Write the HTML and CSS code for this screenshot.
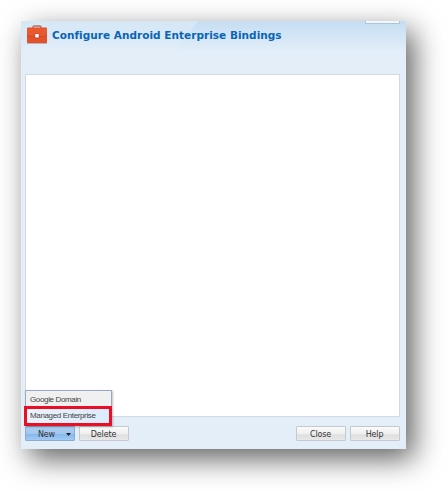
FILE: index.html
```html
<!DOCTYPE html>
<html lang="en">
<head>
<meta charset="utf-8">
<title>Configure Android Enterprise Bindings</title>
<link rel="stylesheet" href="styles.css">
</head>
<body>
<main class="window">
  <header class="header">
    <svg class="briefcase" width="22" height="20" viewBox="0 0 22 20">
      <path d="M7 3.500V2Q7 1 8.500 1H13.500Q15 1 15 2V3.500" fill="none" stroke="#b96d5c" stroke-width="1.500"/>
      <rect x="1" y="2.500" width="20" height="15.500" rx="1" fill="#e4512b"/>
      <path d="M1 3.500h20v6.500L18.500 11.500h-15L1 10z" fill="#ea582f"/>
      <path d="M1 10L3.500 11.500h15L21 10" fill="none" stroke="#bd492d" stroke-width=".8"/>
      <path d="M1 18h20" stroke="#b2573f" stroke-width=".8"/>
      <rect x="8.500" y="8.500" width="5" height="5" rx="1" fill="#d4442a"/>
      <rect x="9.200" y="9" width="3.600" height="3.600" rx=".8" fill="#fff"/>
    </svg>
    <h1 class="title">Configure Android Enterprise Bindings</h1>
    <span class="tab-edge"></span>
  </header>
  <section class="panel"></section>
  <footer class="footer">
    <div class="new-wrap">
      <button class="btn btn-new">New<svg class="caret" width="5" height="3" viewBox="0 0 5 3"><path d="M0 0h5L2.500 3z" fill="#222"/></svg></button>
      <div class="menu">
        <div class="item">Google Domain</div>
        <div class="item selected">Managed Enterprise</div>
      </div>
    </div>
    <button class="btn">Delete</button>
    <button class="btn btn-close">Close</button>
    <button class="btn">Help</button>
  </footer>
</main>
</body>
</html>
```
FILE: styles.css
```css
* { box-sizing: border-box; }
body {
  margin: 0;
  height: 491px;
  padding: 21px 0 0 21px;
  background: #fff;
  overflow: hidden;
}
.window {
  display: flex;
  flex-direction: column;
  width: 385px;
  height: 428px;
  padding: 0 6px 0 4px;
  background: #e3eef9;
  box-shadow: 8px 10px 27px rgba(0, 0, 0, .62);
}
.header {
  position: relative;
  display: flex;
  flex: none;
  height: 53px;
  margin: 0 -6px 0 -4px;
  padding: 4px 0 0 5px;
  background: linear-gradient(#c5ddf2, #e3eef9 31px);
}
.header::before {
  content: "";
  position: absolute;
  left: 0;
  top: 0;
  width: 177px;
  height: 30px;
  background: linear-gradient(#d5e7f6, #dbe9f7 18px, #e3eef9);
  clip-path: polygon(0 0, 100% 0, 155px 100%, 0 100%);
}
.briefcase { position: relative; flex: none; }
.title {
  position: relative;
  margin: 3px 0 0 4px;
  font: bold 10.500px/14px "DejaVu Sans", sans-serif;
  letter-spacing: .03px;
  color: #0865b5;
  white-space: nowrap;
}
.tab-edge {
  position: absolute;
  right: 6px;
  top: 0;
  width: 35px;
  height: 3px;
  background: #f3f7fb;
  border: 1px solid #aac7e0;
  border-top: 0;
}
.panel {
  flex: none;
  height: 343px;
  background: #fff;
  border: 1px solid #d2d9e4;
  width: 375px;
}
.footer {
  display: flex;
  gap: 4px;
  padding-top: 9px;
}
.new-wrap { position: relative; }
.btn {
  display: flex;
  align-items: center;
  justify-content: center;
  width: 50px;
  height: 15px;
  padding: 2px 1px 0 0;
  border: 1px solid #c5c8cd;
  border-radius: 1px;
  background: linear-gradient(#fbfbfb, #eee 55%, #dedede 60%, #e8e8e8);
  font: 8px/10px "DejaVu Sans", sans-serif;
  letter-spacing: -.15px;
  color: #333;
}
.btn-new {
  position: relative;
  padding-right: 7px;
  border-color: #8dabd0;
  background: linear-gradient(#adcef0, #a2c8ef 50%, #87b6e8 55%, #9ecbf8);
}
.caret { position: absolute; right: 3px; top: 6px; }
.btn-close { margin-left: auto; }
.menu {
  position: absolute;
  left: 0;
  bottom: 15px;
  width: 87px;
  height: 36px;
  background: #f0f0f0;
  border: 1px solid #98a9c5;
  box-shadow: 1px 1px 2px rgba(0, 0, 0, .25);
  font: 8px/18px "Liberation Sans", sans-serif;
  letter-spacing: -.36px;
  color: #444;
  white-space: nowrap;
}
.item { height: 15px; padding-left: 4px; }
.selected {
  height: 20px;
  margin: 0 -1px 0 -2px;
  padding-left: 3px;
  line-height: 14px;
  border: 3px solid #ea0f24;
  background: linear-gradient(90deg, #eaf2fb, #dcebfc);
}
```
